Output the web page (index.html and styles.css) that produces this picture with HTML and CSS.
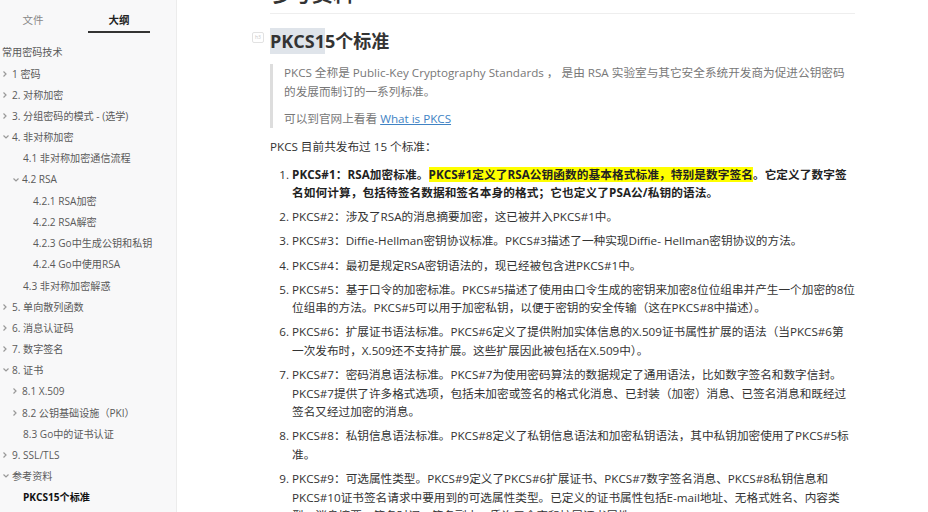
FILE: index.html
```html
<!DOCTYPE html>
<html lang="zh-CN">
<head>
<meta charset="utf-8">
<title>PKCS15个标准</title>
<link rel="stylesheet" href="styles.css">
</head>
<body>
<div class="app">
  <aside class="sidebar">
    <div class="tabs">
      <div class="tab">文件</div>
      <div class="tab active">大纲</div>
    </div>
    <ul class="outline">
      <li class="row lvl0"><span class="label">常用密码技术</span></li>
      <li class="row lvl1"><span class="tw"><svg width="6" height="8" viewBox="0 0 6 8"><path d="M1.5 1.5L4 4L1.5 6.5" fill="none" stroke="#999" stroke-width="1.2"/></svg></span><span class="label">1 密码</span></li>
      <li class="row lvl1"><span class="tw"><svg width="6" height="8" viewBox="0 0 6 8"><path d="M1.5 1.5L4 4L1.5 6.5" fill="none" stroke="#999" stroke-width="1.2"/></svg></span><span class="label">2. 对称加密</span></li>
      <li class="row lvl1"><span class="tw"><svg width="6" height="8" viewBox="0 0 6 8"><path d="M1.5 1.5L4 4L1.5 6.5" fill="none" stroke="#999" stroke-width="1.2"/></svg></span><span class="label">3. 分组密码的模式 - (选学)</span></li>
      <li class="row lvl1"><span class="tw"><svg width="8" height="8" viewBox="0 0 8 8"><path d="M1.5 2.5L4 5L6.5 2.5" fill="none" stroke="#999" stroke-width="1.2"/></svg></span><span class="label">4. 非对称加密</span></li>
      <li class="row lvl2 leaf"><span class="label">4.1 非对称加密通信流程</span></li>
      <li class="row lvl2"><span class="tw"><svg width="8" height="8" viewBox="0 0 8 8"><path d="M1.5 2.5L4 5L6.5 2.5" fill="none" stroke="#999" stroke-width="1.2"/></svg></span><span class="label">4.2 RSA</span></li>
      <li class="row lvl3 leaf"><span class="label">4.2.1 RSA加密</span></li>
      <li class="row lvl3 leaf"><span class="label">4.2.2 RSA解密</span></li>
      <li class="row lvl3 leaf"><span class="label">4.2.3 Go中生成公钥和私钥</span></li>
      <li class="row lvl3 leaf"><span class="label">4.2.4 Go中使用RSA</span></li>
      <li class="row lvl2 leaf"><span class="label">4.3 非对称加密解惑</span></li>
      <li class="row lvl1"><span class="tw"><svg width="6" height="8" viewBox="0 0 6 8"><path d="M1.5 1.5L4 4L1.5 6.5" fill="none" stroke="#999" stroke-width="1.2"/></svg></span><span class="label">5. 单向散列函数</span></li>
      <li class="row lvl1"><span class="tw"><svg width="6" height="8" viewBox="0 0 6 8"><path d="M1.5 1.5L4 4L1.5 6.5" fill="none" stroke="#999" stroke-width="1.2"/></svg></span><span class="label">6. 消息认证码</span></li>
      <li class="row lvl1"><span class="tw"><svg width="6" height="8" viewBox="0 0 6 8"><path d="M1.5 1.5L4 4L1.5 6.5" fill="none" stroke="#999" stroke-width="1.2"/></svg></span><span class="label">7. 数字签名</span></li>
      <li class="row lvl1"><span class="tw"><svg width="8" height="8" viewBox="0 0 8 8"><path d="M1.5 2.5L4 5L6.5 2.5" fill="none" stroke="#999" stroke-width="1.2"/></svg></span><span class="label">8. 证书</span></li>
      <li class="row lvl2"><span class="tw"><svg width="6" height="8" viewBox="0 0 6 8"><path d="M1.5 1.5L4 4L1.5 6.5" fill="none" stroke="#999" stroke-width="1.2"/></svg></span><span class="label">8.1 X.509</span></li>
      <li class="row lvl2"><span class="tw"><svg width="6" height="8" viewBox="0 0 6 8"><path d="M1.5 1.5L4 4L1.5 6.5" fill="none" stroke="#999" stroke-width="1.2"/></svg></span><span class="label">8.2 公钥基础设施（PKI）</span></li>
      <li class="row lvl2 leaf"><span class="label">8.3 Go中的证书认证</span></li>
      <li class="row lvl1"><span class="tw"><svg width="6" height="8" viewBox="0 0 6 8"><path d="M1.5 1.5L4 4L1.5 6.5" fill="none" stroke="#999" stroke-width="1.2"/></svg></span><span class="label">9. SSL/TLS</span></li>
      <li class="row lvl1"><span class="tw"><svg width="8" height="8" viewBox="0 0 8 8"><path d="M1.5 2.5L4 5L6.5 2.5" fill="none" stroke="#999" stroke-width="1.2"/></svg></span><span class="label">参考资料</span></li>
      <li class="row lvl2 leaf current"><span class="label">PKCS15个标准</span></li>
    </ul>
  </aside>
  <main class="content">
    <div class="doc">
      <h2 class="h2">参考资料</h2>
      <h3 class="h3"><span class="hbadge">h3</span><span class="sel">PKCS1</span>5个标准</h3>
      <blockquote class="quote">
        <p>PKCS 全称是 Public-Key Cryptography Standards ， 是由 RSA 实验室与其它安全系统开发商为促进公钥密码的发展而制订的一系列标准。</p>
        <p>可以到官网上看看 <a class="link" href="#">What is PKCS</a></p>
      </blockquote>
      <p class="para">PKCS 目前共发布过 15 个标准：</p>
      <ol class="list">
        <li><span class="strong">PKCS#1：RSA加密标准。<span class="mark">PKCS#1定义了RSA公钥函数的基本格式标准，特别是数字签名</span>。它定义了数字签名如何计算，包括待签名数据和签名本身的格式；它也定义了PSA公/私钥的语法。</span></li>
        <li>PKCS#2：涉及了RSA的消息摘要加密，这已被并入PKCS#1中。</li>
        <li>PKCS#3：Diffie-Hellman密钥协议标准。PKCS#3描述了一种实现Diffie- Hellman密钥协议的方法。</li>
        <li>PKCS#4：最初是规定RSA密钥语法的，现已经被包含进PKCS#1中。</li>
        <li>PKCS#5：基于口令的加密标准。PKCS#5描述了使用由口令生成的密钥来加密8位位组串并产生一个加密的8位位组串的方法。PKCS#5可以用于加密私钥，以便于密钥的安全传输（这在PKCS#8中描述）。</li>
        <li>PKCS#6：扩展证书语法标准。PKCS#6定义了提供附加实体信息的X.509证书属性扩展的语法（当PKCS#6第一次发布时，X.509还不支持扩展。这些扩展因此被包括在X.509中）。</li>
        <li>PKCS#7：密码消息语法标准。PKCS#7为使用密码算法的数据规定了通用语法，比如数字签名和数字信封。PKCS#7提供了许多格式选项，包括未加密或签名的格式化消息、已封装（加密）消息、已签名消息和既经过签名又经过加密的消息。</li>
        <li>PKCS#8：私钥信息语法标准。PKCS#8定义了私钥信息语法和加密私钥语法，其中私钥加密使用了PKCS#5标准。</li>
        <li>PKCS#9：可选属性类型。PKCS#9定义了PKCS#6扩展证书、PKCS#7数字签名消息、PKCS#8私钥信息和PKCS#10证书签名请求中要用到的可选属性类型。已定义的证书属性包括E-mail地址、无格式姓名、内容类型、消息摘要、签名时间、签名副本、质询口令字和扩展证书属性。</li>
      </ol>
    </div>
  </main>
</div>
</body>
</html>
```

FILE: styles.css
```css
html, body {
  margin: 0;
  padding: 0;
  background: #ffffff;
}
body {
  width: 928px;
  height: 512px;
  overflow: hidden;
  font-family: "Open Sans", "Noto Sans CJK SC", sans-serif;
  color: #333333;
}
.app {
  display: flex;
  height: 512px;
}
.sidebar {
  width: 176px;
  flex: none;
  background: #f8f8f9;
  border-right: 1px solid #ececec;
  overflow: hidden;
}
.tabs {
  display: flex;
  gap: 24px;
  padding-left: 2px;
  height: 34px;
}
.tab {
  width: 62px;
  height: 31px;
  box-sizing: border-box;
  padding-top: 12px;
  text-align: center;
  font-size: 10.5px;
  line-height: 16px;
  color: #888888;
}
.tab.active {
  color: #222222;
  font-weight: bold;
  border-bottom: 2px solid #333333;
  height: 33px;
}
.outline {
  list-style: none;
  margin: 0;
  padding: 7.4px 0 0 0;
}
.row {
  display: flex;
  align-items: center;
  height: 21.2px;
  font-size: 10.1px;
  color: #5a5a5a;
  white-space: nowrap;
}
.tw {
  width: 10px;
  flex: none;
  display: flex;
  align-items: center;
  padding-top: 1px;
}
.lvl0 { padding-left: 2px; }
.lvl1 { padding-left: 2px; }
.lvl2 { padding-left: 12px; }
.lvl3 { padding-left: 22px; }
.lvl2.leaf { padding-left: 23px; }
.lvl3.leaf { padding-left: 33px; }
.row.current {
  color: #111111;
  font-weight: bold;
}
.content {
  flex: 1;
  overflow: hidden;
}
.doc {
  width: 585px;
  margin-left: 93px;
  margin-top: -20px;
}
.h2 {
  margin: 0;
  font-size: 21px;
  line-height: 26px;
  font-weight: bold;
  padding-bottom: 7px;
  border-bottom: 1px solid #eeeeee;
  color: #333333;
}
.h3 {
  position: relative;
  margin: 14px 0 10px 0;
  font-size: 18px;
  line-height: 26px;
  font-weight: bold;
  color: #333333;
}
.sel {
  background: #dfe4ea;
  display: inline-block;
}
.hbadge {
  position: absolute;
  left: -18px;
  top: 4px;
  width: 10px;
  height: 9px;
  border: 1px solid #e2e2e2;
  border-radius: 2px;
  font-size: 5px;
  line-height: 9px;
  text-align: center;
  color: #c8c8c8;
  font-weight: normal;
}
.quote {
  margin: 0;
  padding: 0 0 0 11px;
  border-left: 3px solid #dddddd;
  color: #777777;
  font-size: 11.65px;
  line-height: 18.6px;
}
.quote p {
  margin: 8.5px 0 0 0;
}
.quote p:first-child {
  margin-top: 0;
}
.link {
  color: #4183c4;
  text-decoration: underline;
}
.para {
  margin: 9.4px 0 0 0;
  font-size: 11.65px;
  line-height: 18.6px;
}
.list {
  margin: 9.4px 0 0 0;
  padding-left: 22px;
  font-size: 11.65px;
  line-height: 18.6px;
  color: #333333;
}
.list li {
  margin-top: 5.5px;
}
.list li:first-child {
  margin-top: 0;
}
.strong {
  font-weight: bold;
  color: #222222;
  letter-spacing: 0.1px;
}
.mark {
  background: #ffff00;
}
```
